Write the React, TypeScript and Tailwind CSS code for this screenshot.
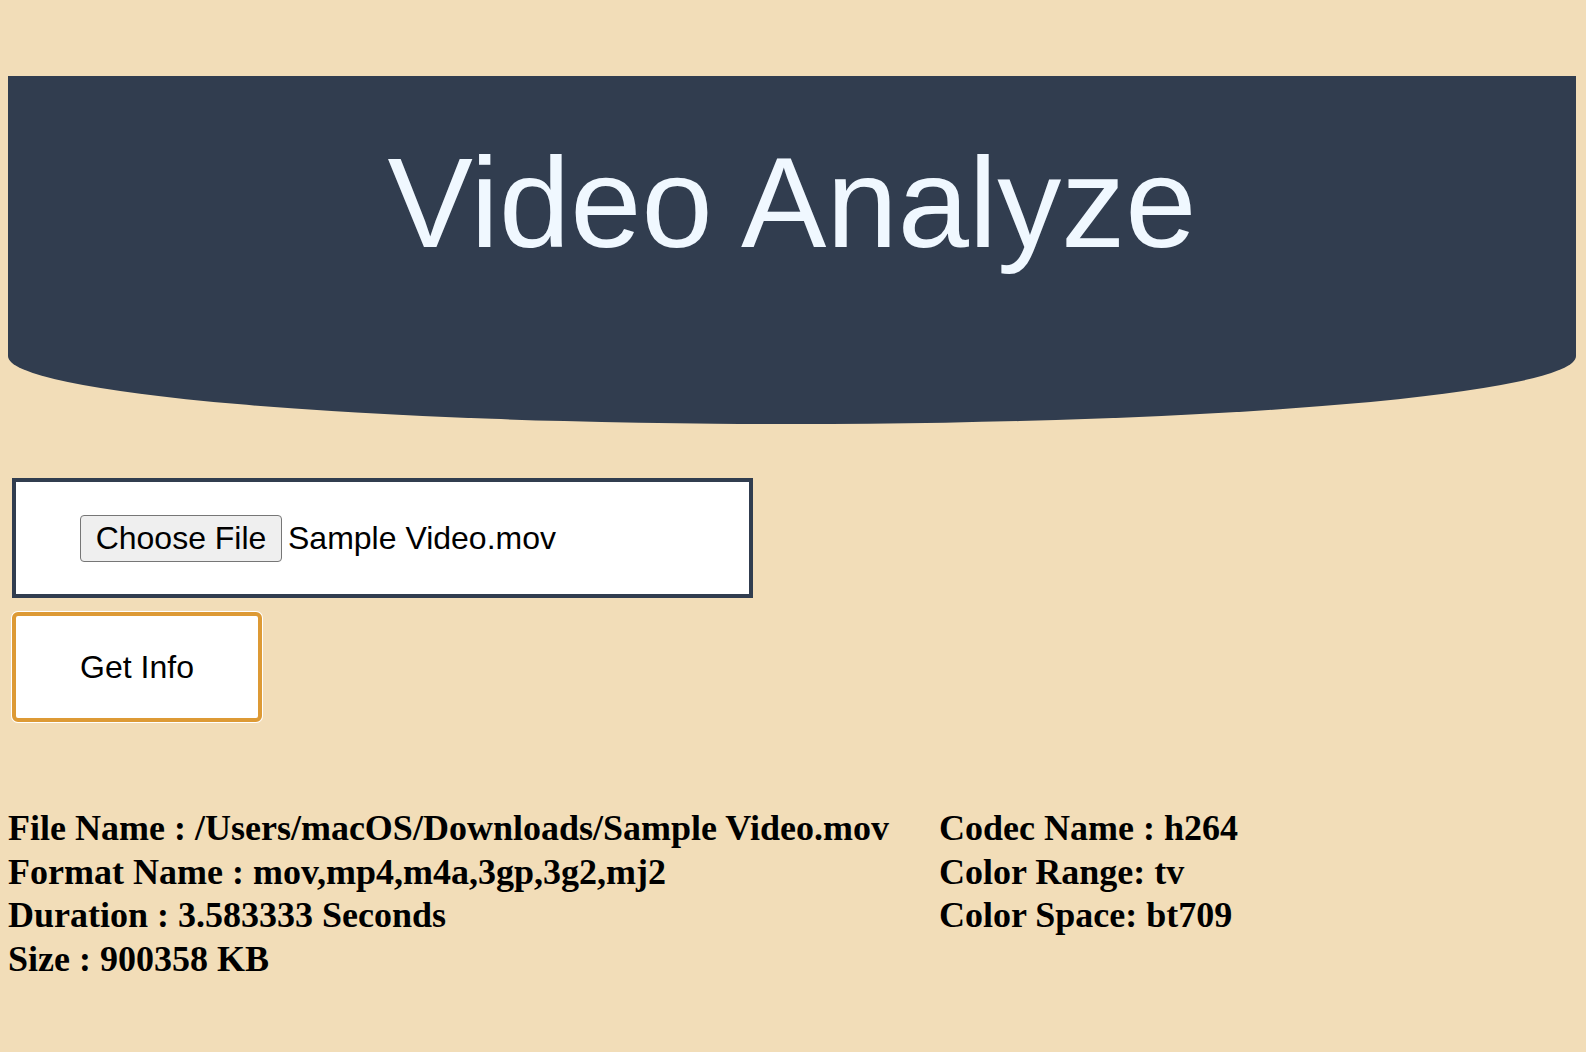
export default function App() {
  const left = [
    "File Name : /Users/macOS/Downloads/Sample Video.mov",
    "Format Name : mov,mp4,m4a,3gp,3g2,mj2",
    "Duration : 3.583333 Seconds",
    "Size : 900358 KB",
  ];
  const right = ["Codec Name : h264", "Color Range: tv", "Color Space: bt709"];

  return (
    <div className="min-h-[1052px] bg-[#f2ddb8] pt-[76px] pb-10">
      {/* Header with curved bottom */}
      <header className="ml-2 mr-[10px] h-[348px] rounded-b-[50%_68px] bg-[#313d4f] pt-[63px]">
        <h1 className="text-center font-['Liberation_Sans',Arial,sans-serif] text-[128px] leading-none text-[#f0f8ff]">
          Video Analyze
        </h1>
      </header>

      {/* File picker */}
      <div className="ml-3 mt-[54px] flex h-[120px] w-[741px] items-center border-4 border-[#313d4f] bg-white pl-16 font-['Liberation_Sans',Arial,sans-serif] text-[32px] text-black">
        <button className="flex h-[47px] w-[202px] items-center justify-center rounded-[4px] border border-[#767676] bg-[#efefef] leading-none">
          Choose File
        </button>
        <span className="ml-[6px] leading-none">Sample Video.mov</span>
      </div>

      <button className="ml-3 mt-[14px] flex h-[110px] w-[250px] items-center justify-center rounded-[6px] border-4 border-[#dd9a35] bg-white font-['Liberation_Sans',Arial,sans-serif] text-[32px] leading-none text-black ring-1 ring-white">
        Get Info
      </button>

      {/* Video info */}
      <div className="ml-2 mt-[85px] flex gap-[50px] font-['Liberation_Serif','Times_New_Roman',serif] text-[36px] font-bold leading-[43.5px] text-black">
        <div>
          {left.map((t) => (
            <div key={t}>{t}</div>
          ))}
        </div>
        <div>
          {right.map((t) => (
            <div key={t}>{t}</div>
          ))}
        </div>
      </div>
    </div>
  );
}
